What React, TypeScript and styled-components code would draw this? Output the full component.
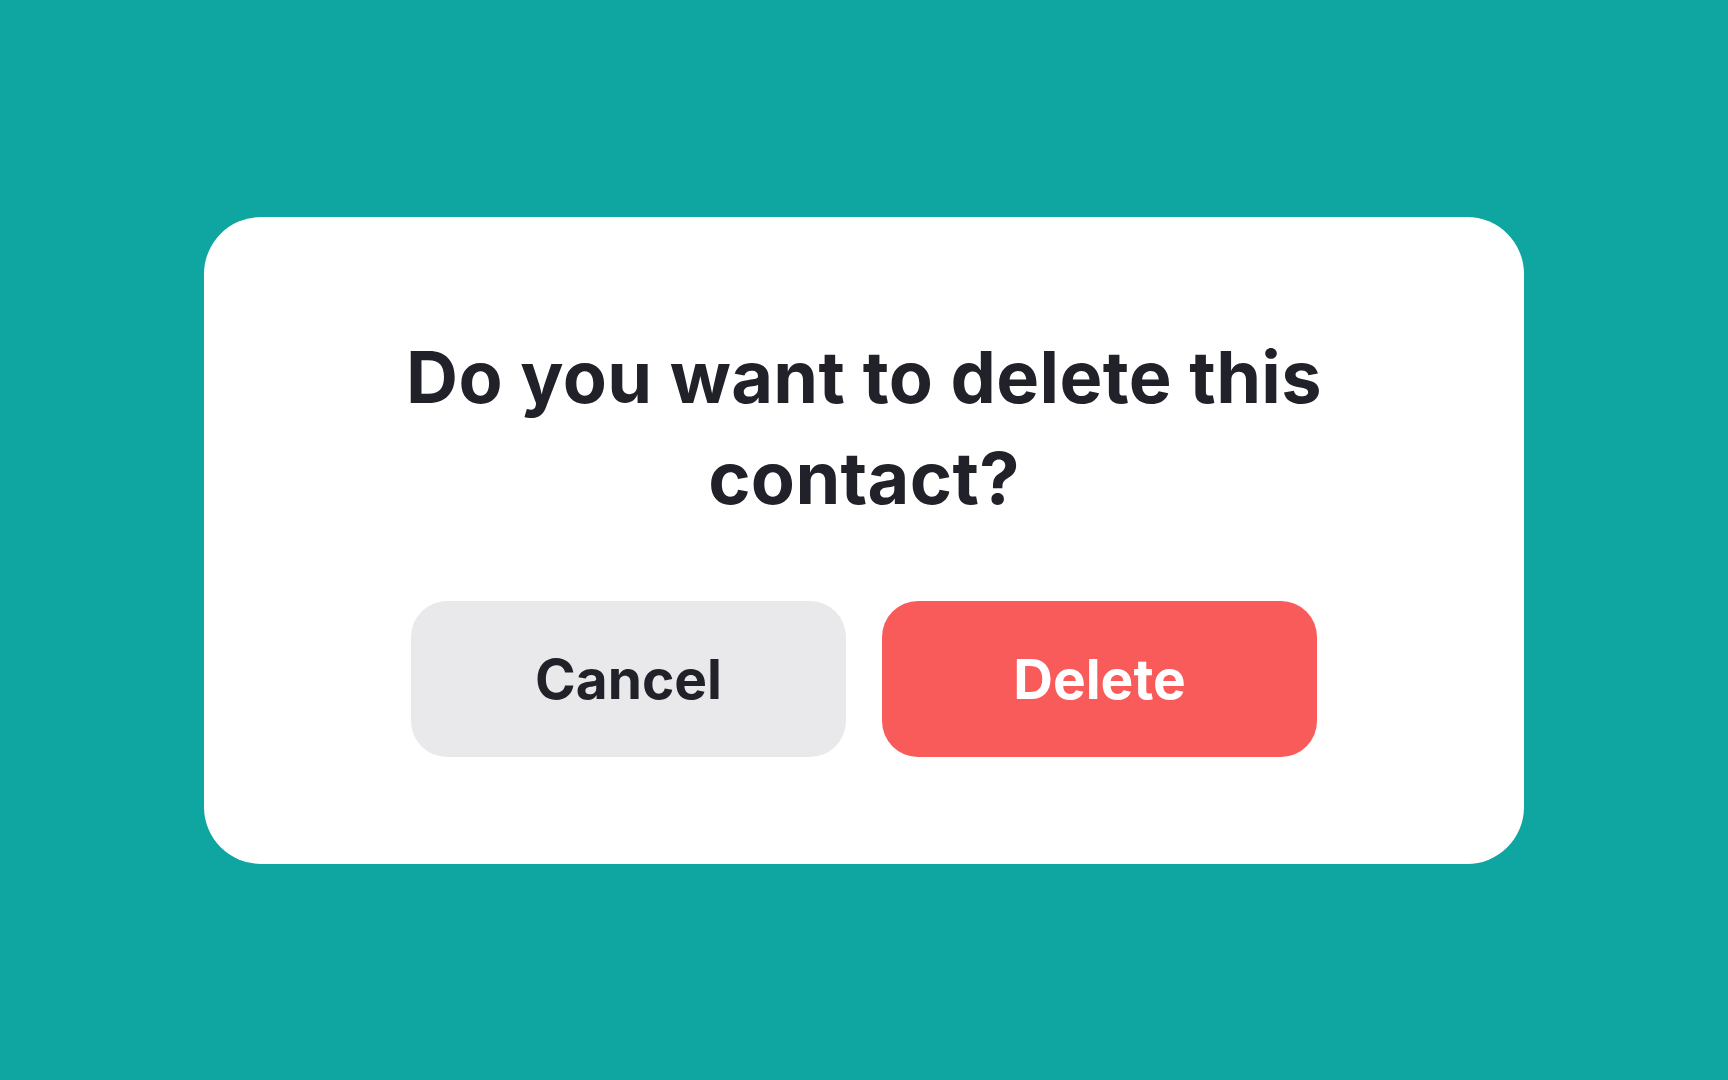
import React from "react";
import styled, { createGlobalStyle } from "styled-components";

const GlobalStyle = createGlobalStyle`
  * { box-sizing: border-box; }
  html, body { margin: 0; padding: 0; }
  body {
    background: #0fa5a0;
    font-family: Inter, "Noto Sans", sans-serif;
  }
`;

const Screen = styled.div`
  width: 100vw;
  height: 100vh;
  display: flex;
  align-items: center;
  justify-content: center;
  background: #0fa5a0;
`;

const Dialog = styled.div`
  width: 1320px;
  padding: 109px 180px 107px;
  background: #ffffff;
  border-radius: 57px;
  display: flex;
  flex-direction: column;
  align-items: center;
  gap: 73px;
`;

const Title = styled.h2`
  margin: 0;
  font-size: 72px;
  line-height: 101px;
  font-weight: 700;
  letter-spacing: 0.35px;
  color: #212129;
  text-align: center;
`;

const Actions = styled.div`
  width: 906px;
  display: grid;
  grid-template-columns: 1fr 1fr;
  gap: 36px;
`;

const Button = styled.button<{ $danger?: boolean }>`
  height: 156px;
  border: none;
  border-radius: 36px;
  font-family: Inter, "Noto Sans", sans-serif;
  font-size: 55px;
  font-weight: 700;
  background: ${(p) => (p.$danger ? "#f95b5b" : "#e9e9eb")};
  color: ${(p) => (p.$danger ? "#ffffff" : "#212129")};
  cursor: pointer;
`;

export default function App() {
  return (
    <>
      <GlobalStyle />
      <Screen>
        <Dialog role="dialog">
          <Title>Do you want to delete this contact?</Title>
          <Actions>
            <Button>Cancel</Button>
            <Button $danger>Delete</Button>
          </Actions>
        </Dialog>
      </Screen>
    </>
  );
}
